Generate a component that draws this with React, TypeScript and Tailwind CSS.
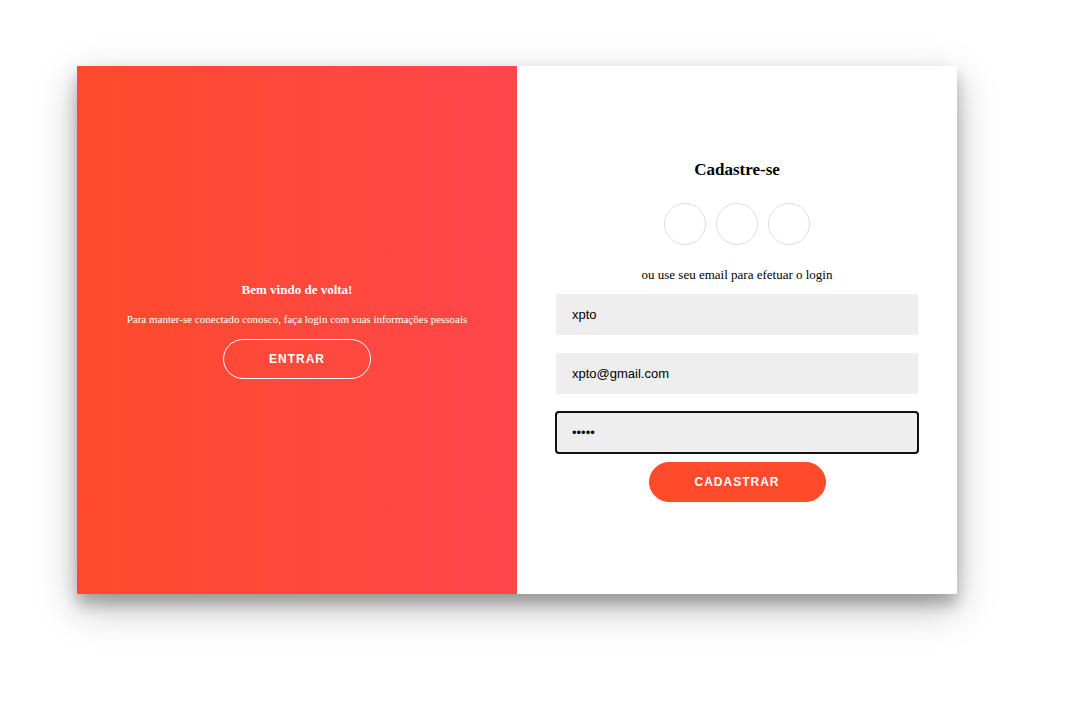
import { useState } from "react";

const SOCIAL = ["Facebook", "Google", "LinkedIn"];

function Field({ label, type, initial, autoFocus = false }: { label: string; type: string; initial: string; autoFocus?: boolean }) {
  const [value, setValue] = useState(initial);
  return (
    <input
      aria-label={label}
      type={type}
      value={value}
      autoFocus={autoFocus}
      onChange={(e) => setValue(e.target.value)}
      className="my-[9px] h-[41px] w-full bg-[#eeeeee] px-4 font-['Liberation_Sans',sans-serif] text-[13px] text-black caret-transparent focus:[outline:auto_1px_#101010]"
    />
  );
}

export default function App() {
  return (
    <main className="flex min-h-screen items-start bg-white pt-[66px] pr-[126px] pb-16 pl-[77px] font-['Liberation_Serif',serif]">
      <div className="grid min-h-[528px] w-full grid-cols-2 shadow-[0_14px_38px_rgba(0,0,0,0.25),0_10px_14px_rgba(0,0,0,0.25)]">
        <section className="flex flex-col items-center justify-center bg-linear-to-r/srgb from-[#ff4b2b] to-[#ff464c] px-10 text-center text-white">
          <h2 className="text-[13px] leading-[18px] font-bold">Bem vindo de volta!</h2>
          <p className="my-[14px] text-[11px] leading-3">
            Para manter-se conectado conosco, faça login com suas informações pessoais
          </p>
          <button className="h-10 rounded-[20px] border border-white px-[45px] font-['Liberation_Sans',sans-serif] text-xs font-bold tracking-[1px] uppercase">
            Entrar
          </button>
        </section>
        <form className="flex flex-col items-center justify-center bg-white px-[39px] text-center text-black" onSubmit={(e) => e.preventDefault()}>
          <h1 className="text-[17px] leading-[22px] font-bold">Cadastre-se</h1>
          <div className="mt-[22px] mb-5 flex gap-[10px]">
            {SOCIAL.map((name) => (
              <a key={name} href="#" aria-label={name} className="size-[42px] rounded-full border border-[#dddddd]" />
            ))}
          </div>
          <p className="text-[13px] leading-5">ou use seu email para efetuar o login</p>
          <Field label="Nome" type="text" initial="xpto" />
          <Field label="Email" type="email" initial="xpto@gmail.com" />
          <Field label="Senha" type="password" initial="12345" autoFocus />
          <button className="h-10 rounded-[20px] border border-[#ff4b2b] bg-[#ff4b2b] px-[45px] font-['Liberation_Sans',sans-serif] text-xs font-bold tracking-[1px] text-white uppercase">
            Cadastrar
          </button>
        </form>
      </div>
    </main>
  );
}
